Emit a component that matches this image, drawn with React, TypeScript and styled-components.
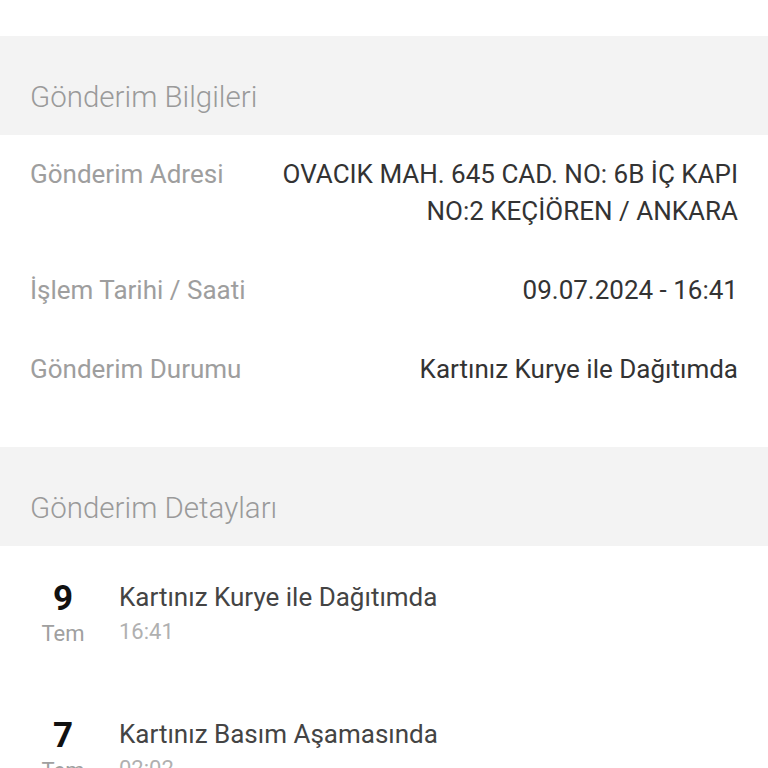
import { FC } from "react";
import styled, { createGlobalStyle } from "styled-components";

type InfoRow = {
  label: string,
  value: string[]
};

type Step = {
  day: string,
  month: string,
  title: string,
  time: string
};

const infoRows: InfoRow[] = [
  { label: "Gönderim Adresi", value: ["OVACIK MAH. 645 CAD. NO: 6B İÇ KAPI", "NO:2 KEÇİÖREN / ANKARA"] },
  { label: "İşlem Tarihi / Saati", value: ["09.07.2024 - 16:41"] },
  { label: "Gönderim Durumu", value: ["Kartınız Kurye ile Dağıtımda"] }
];

const steps: Step[] = [
  { day: "9", month: "Tem", title: "Kartınız Kurye ile Dağıtımda", time: "16:41" },
  { day: "7", month: "Tem", title: "Kartınız Basım Aşamasında", time: "02:02" }
];

const GlobalStyle = createGlobalStyle`
  html, body {
    margin: 0;
    padding: 0;
    background: #ffffff;
    font-family: Roboto, "Noto Sans", sans-serif;
    overflow: hidden;
  }
`;

const Page = styled.div`
  display: flex;
  flex-direction: column;
  padding-top: 36px;
`;

const SectionHeader = styled.div`
  flex-shrink: 0;
  background: #f3f3f3;
  height: 99px;
  box-sizing: border-box;
  padding: 43px 30px 0;
  font-size: 29.5px;
  font-weight: 300;
  line-height: 36px;
  color: #9a9a9a;
`;

const InfoList = styled.div`
  display: flex;
  flex-direction: column;
  padding: 21px 0 59px;
`;

const Row = styled.div`
  display: flex;
  justify-content: space-between;
  align-items: flex-start;
  padding: 0 30px;

  & + & {
    margin-top: 42px;
  }
`;

const Label = styled.div`
  font-size: 26px;
  line-height: 37px;
  color: #9e9e9e;
  white-space: nowrap;
`;

const Value = styled.div`
  font-size: 26px;
  line-height: 37px;
  color: #333333;
  text-align: right;
`;

const Timeline = styled.div`
  display: flex;
  flex-direction: column;
  padding-top: 33px;
`;

const StepItem = styled.div`
  display: grid;
  grid-template-columns: 66px 1fr;
  column-gap: 23px;
  padding: 0 30px;
  height: 137px;
`;

const DateCol = styled.div`
  display: flex;
  flex-direction: column;
  align-items: center;
`;

const Day = styled.div`
  font-size: 35px;
  font-weight: 700;
  line-height: 40px;
  color: #111111;
`;

const Month = styled.div`
  font-size: 22px;
  line-height: 30px;
  color: #a0a0a0;
`;

const StepBody = styled.div`
  display: flex;
  flex-direction: column;
`;

const StepTitle = styled.div`
  font-size: 26px;
  line-height: 36px;
  color: #444444;
`;

const StepTime = styled.div`
  font-size: 22px;
  line-height: 34px;
  color: #b0b0b0;
`;

const App: FC = () => {
  return (
    <>
      <GlobalStyle />
      <Page>
        <SectionHeader>Gönderim Bilgileri</SectionHeader>
        <InfoList>
          {infoRows.map(row => (
            <Row key={row.label}>
              <Label>{row.label}</Label>
              <Value>
                {row.value.map(line => <div key={line}>{line}</div>)}
              </Value>
            </Row>
          ))}
        </InfoList>
        <SectionHeader>Gönderim Detayları</SectionHeader>
        <Timeline>
          {steps.map(step => (
            <StepItem key={step.title}>
              <DateCol>
                <Day>{step.day}</Day>
                <Month>{step.month}</Month>
              </DateCol>
              <StepBody>
                <StepTitle>{step.title}</StepTitle>
                <StepTime>{step.time}</StepTime>
              </StepBody>
            </StepItem>
          ))}
        </Timeline>
      </Page>
    </>
  );
};

export default App;
